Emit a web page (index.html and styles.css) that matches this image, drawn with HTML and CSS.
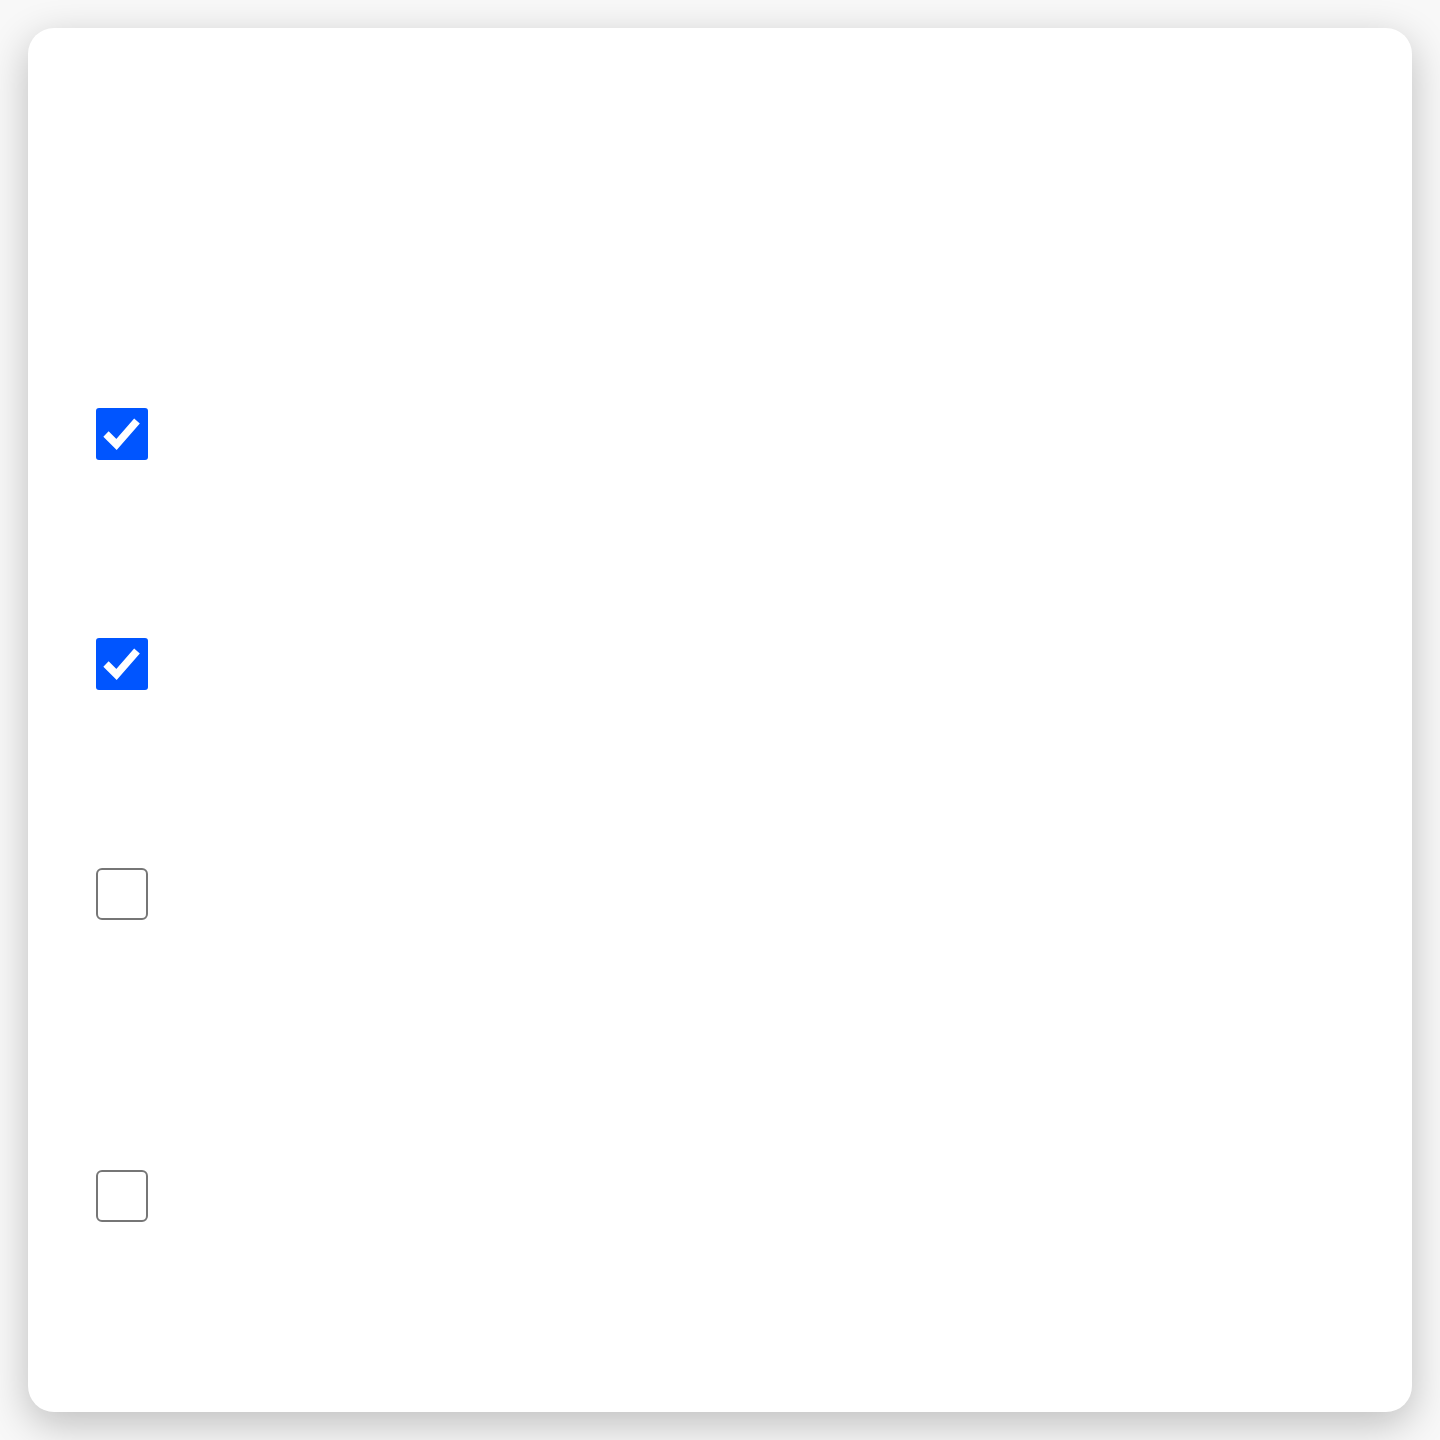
FILE: index.html
```html
<!DOCTYPE html>
<html>
<head>
<meta charset="utf-8">
<link rel="stylesheet" href="styles.css">
</head>
<body>
<div class="card">
  <div class="row r1"><span class="box checked"><svg viewBox="0 0 52 52" width="52" height="52"><path d="M10 26 L20.5 36.5 L41 13" fill="none" stroke="#fff" stroke-width="7.5" stroke-linejoin="miter"/></svg></span></div>
  <div class="row r2"><span class="box checked"><svg viewBox="0 0 52 52" width="52" height="52"><path d="M10 26 L20.5 36.5 L41 13" fill="none" stroke="#fff" stroke-width="7.5" stroke-linejoin="miter"/></svg></span></div>
  <div class="row r3"><span class="box"></span></div>
  <div class="row r4"><span class="box"></span></div>
</div>
</body>
</html>
```
FILE: styles.css
```css
html, body { margin: 0; padding: 0; }
body {
  width: 1440px;
  height: 1440px;
  background: #f8f8f8;
  font-family: "Liberation Sans", Arial, sans-serif;
  padding: 28px;
  box-sizing: border-box;
}
.card {
  width: 1384px;
  height: 1384px;
  background: #fff;
  border-radius: 26px;
  box-shadow: 0 12px 40px rgba(0,0,0,0.24);
  box-sizing: border-box;
  padding: 380px 68px 0;
  display: flex;
  flex-direction: column;
}
.row { display: flex; height: 52px; }
.r2, .r3 { margin-top: 178px; }
.r4 { margin-top: 250px; }
.box {
  width: 52px;
  height: 52px;
  box-sizing: border-box;
  border: 2px solid #767676;
  border-radius: 6px;
  background: #fff;
  display: block;
}
.box.checked {
  border: none;
  border-radius: 3px;
  background: #0055ff;
}
.box svg { display: block; }
```
